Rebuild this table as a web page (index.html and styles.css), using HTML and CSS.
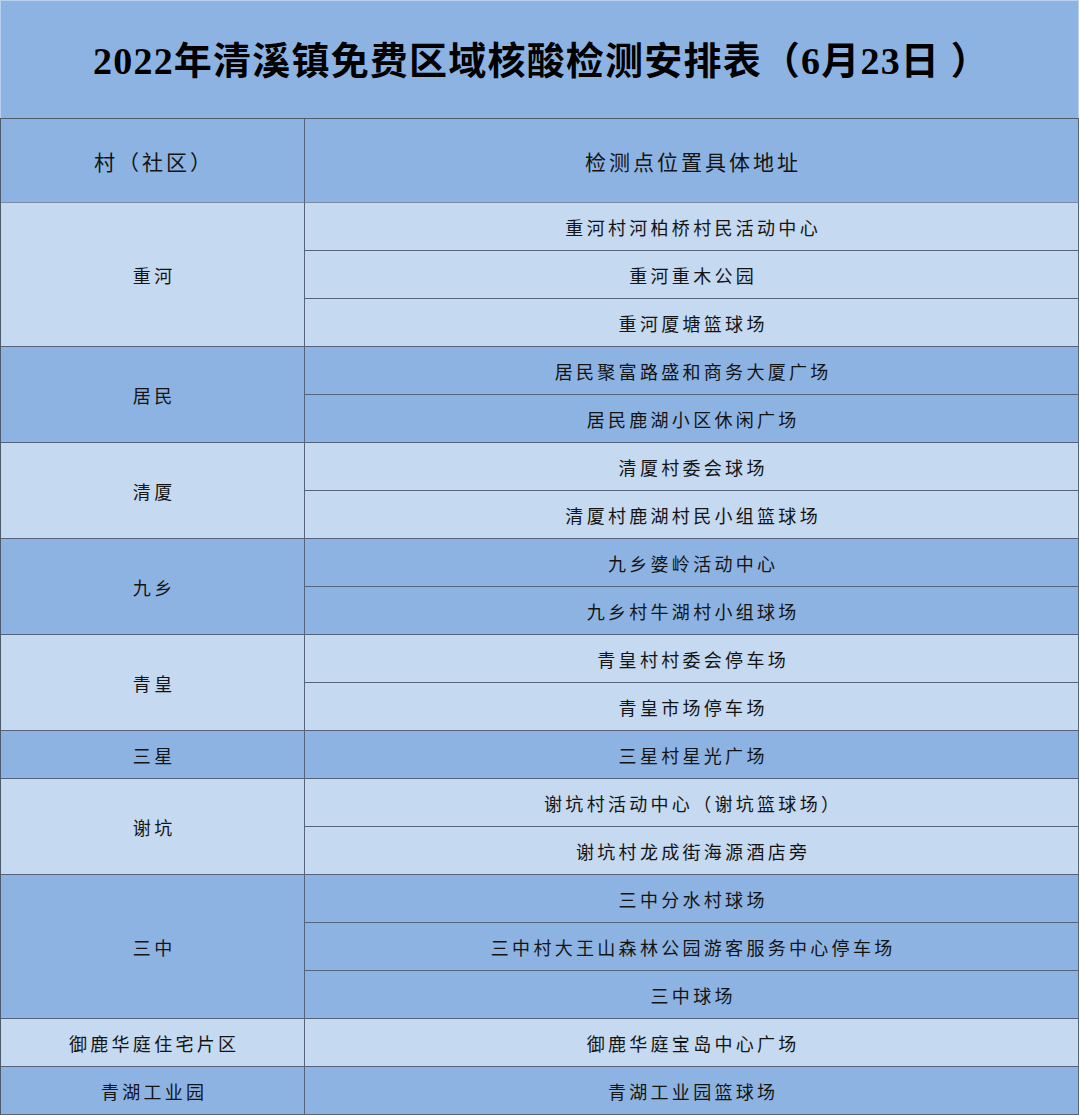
FILE: index.html
```html
<!DOCTYPE html>
<html lang="zh-CN">
<head>
<meta charset="utf-8">
<title>2022年清溪镇免费区域核酸检测安排表</title>
<link rel="stylesheet" href="styles.css">
</head>
<body>
<div class="page">
  <div class="title">2022年清溪镇免费区域核酸检测安排表（6月23日 ）</div>
  <div class="grid">
    <div class="cell head">村（社区）</div>
    <div class="cell head">检测点位置具体地址</div>

    <div class="cell village light span3">重河</div>
    <div class="cell light">重河村河柏桥村民活动中心</div>
    <div class="cell light">重河重木公园</div>
    <div class="cell light">重河厦塘篮球场</div>

    <div class="cell village dark span2">居民</div>
    <div class="cell dark">居民聚富路盛和商务大厦广场</div>
    <div class="cell dark">居民鹿湖小区休闲广场</div>

    <div class="cell village light span2">清厦</div>
    <div class="cell light">清厦村委会球场</div>
    <div class="cell light">清厦村鹿湖村民小组篮球场</div>

    <div class="cell village dark span2">九乡</div>
    <div class="cell dark">九乡婆岭活动中心</div>
    <div class="cell dark">九乡村牛湖村小组球场</div>

    <div class="cell village light span2">青皇</div>
    <div class="cell light">青皇村村委会停车场</div>
    <div class="cell light">青皇市场停车场</div>

    <div class="cell village dark">三星</div>
    <div class="cell dark">三星村星光广场</div>

    <div class="cell village light span2">谢坑</div>
    <div class="cell light">谢坑村活动中心（谢坑篮球场）</div>
    <div class="cell light">谢坑村龙成街海源酒店旁</div>

    <div class="cell village dark span3">三中</div>
    <div class="cell dark">三中分水村球场</div>
    <div class="cell dark">三中村大王山森林公园游客服务中心停车场</div>
    <div class="cell dark">三中球场</div>

    <div class="cell village light">御鹿华庭住宅片区</div>
    <div class="cell light">御鹿华庭宝岛中心广场</div>

    <div class="cell village dark">青湖工业园</div>
    <div class="cell dark">青湖工业园篮球场</div>
  </div>
</div>
</body>
</html>
```

FILE: styles.css
```css
html, body {
  margin: 0;
  padding: 0;
  background: #ffffff;
}

.page {
  width: 1079px;
  font-family: "Noto Sans CJK SC", "Noto Sans", sans-serif;
  color: #141414;
}

.title {
  box-sizing: border-box;
  height: 118px;
  background: #8db3e2;
  border: 1px solid #b9d0ee;
  border-bottom: none;
  display: flex;
  align-items: center;
  justify-content: center;
  padding-bottom: 4px;
  padding-left: 4px;
  font-family: "Liberation Serif", "Noto Sans CJK SC", serif;
  font-weight: 700;
  font-size: 38px;
  color: #000;
  letter-spacing: 1.2px;
}

.grid {
  display: grid;
  grid-template-columns: 304px 1fr;
  grid-template-rows: 84px;
  grid-auto-rows: 48px;
  border-left: 1px solid #4d5b6b;
  border-top: 1px solid #4d5b6b;
}

.cell {
  box-sizing: border-box;
  border-right: 1px solid #55647a;
  border-bottom: 1px solid #55647a;
  display: flex;
  align-items: center;
  justify-content: center;
  font-size: 18px;
  letter-spacing: 3.3px;
  padding-left: 3.3px;
  padding-top: 1px;
  white-space: nowrap;
}

.head {
  background: #8db3e2;
  font-size: 21px;
  letter-spacing: 3px;
  padding-left: 3px;
  border-bottom: 1px solid #7b8ba3;
}

.light {
  background: #c5d9f1;
}

.dark {
  background: #8db3e2;
}

.village {
  grid-column: 1;
}

.span2 {
  grid-row: span 2;
}

.span3 {
  grid-row: span 3;
}
```
